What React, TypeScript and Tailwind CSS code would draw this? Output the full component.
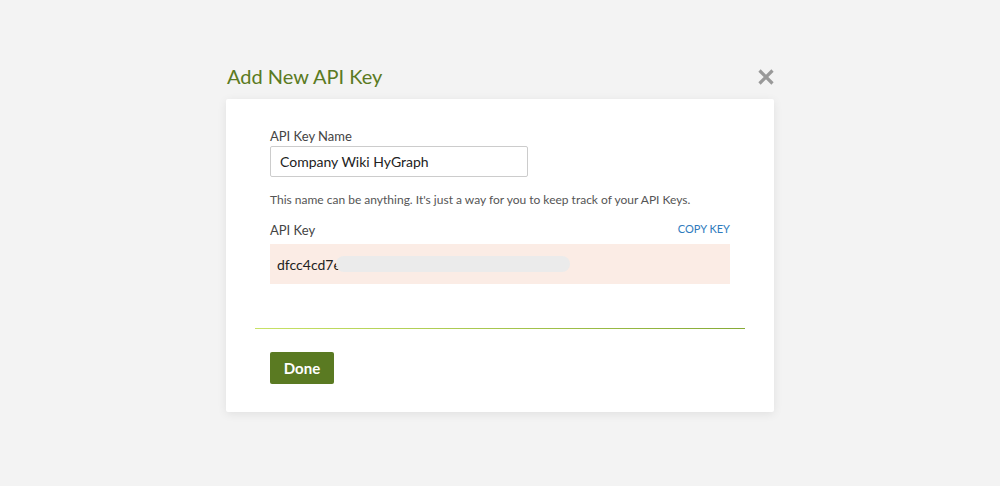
import React from "react";

export default function App() {
  return (
    <div
      className="min-h-[486px] w-full bg-[#f3f3f3] text-[#333]"
      style={{ fontFamily: "Lato, 'Open Sans', sans-serif" }}
    >
      <div className="mx-auto w-[548px] pt-[64px]">
        {/* Header */}
        <div className="flex h-[35px] items-start justify-between">
          <h1 className="ml-[1px] text-[20px] leading-[24px] text-[#5a7a22]">Add New API Key</h1>
          <button type="button" className="mt-[4px] mr-[-1px] text-[#999]" aria-label="Close">
            <svg width="18" height="18" viewBox="0 0 18 18">
              <path d="M2.5 2.5 L15.5 15.5 M15.5 2.5 L2.5 15.5" stroke="currentColor" strokeWidth="3.2" />
            </svg>
          </button>
        </div>

        {/* Card */}
        <div className="rounded-[2px] bg-white shadow-[0_2px_10px_rgba(0,0,0,0.08)] pt-[29px] pb-[28px]">
          <div className="px-[44px]">
            <label className="block text-[13px] leading-[16px] text-[#444]">API Key Name</label>
            <input
              readOnly
              value="Company Wiki HyGraph"
              className="mt-[2px] block h-[31px] w-[258px] rounded-[2px] border border-[#ccc] px-[9px] text-[14px] text-[#222] outline-none"
            />
            <p className="mt-[15px] text-[12px] leading-[16px] text-[#555]">
              This name can be anything. It's just a way for you to keep track of your API Keys.
            </p>

            <div className="mt-[14px] flex items-center justify-between">
              <span className="text-[13px] leading-[16px] text-[#444]">API Key</span>
              <button type="button" className="mt-[-3px] text-[11px] leading-[14px] text-[#2f7bbd]">
                COPY KEY
              </button>
            </div>

            <div className="relative mt-[6px] flex h-[40px] items-center bg-[#fbece5] px-[7px]">
              <span className="text-[14px] text-[#222]">dfcc4cd7e</span>
              <span className="absolute left-[66px] top-[12px] h-[16px] w-[234px] rounded-full bg-[#ebebeb]" />
            </div>
          </div>

          <div className="mx-[29px] mt-[44px] h-[1px] bg-gradient-to-r from-[#c8e266] to-[#86aa36]" />

          <div className="px-[44px]">
            <button
              type="button"
              className="mt-[23px] h-[32px] w-[64px] rounded-[2px] bg-[#5a7a22] text-[15px] font-bold text-white"
            >
              Done
            </button>
          </div>
        </div>
      </div>
    </div>
  );
}
